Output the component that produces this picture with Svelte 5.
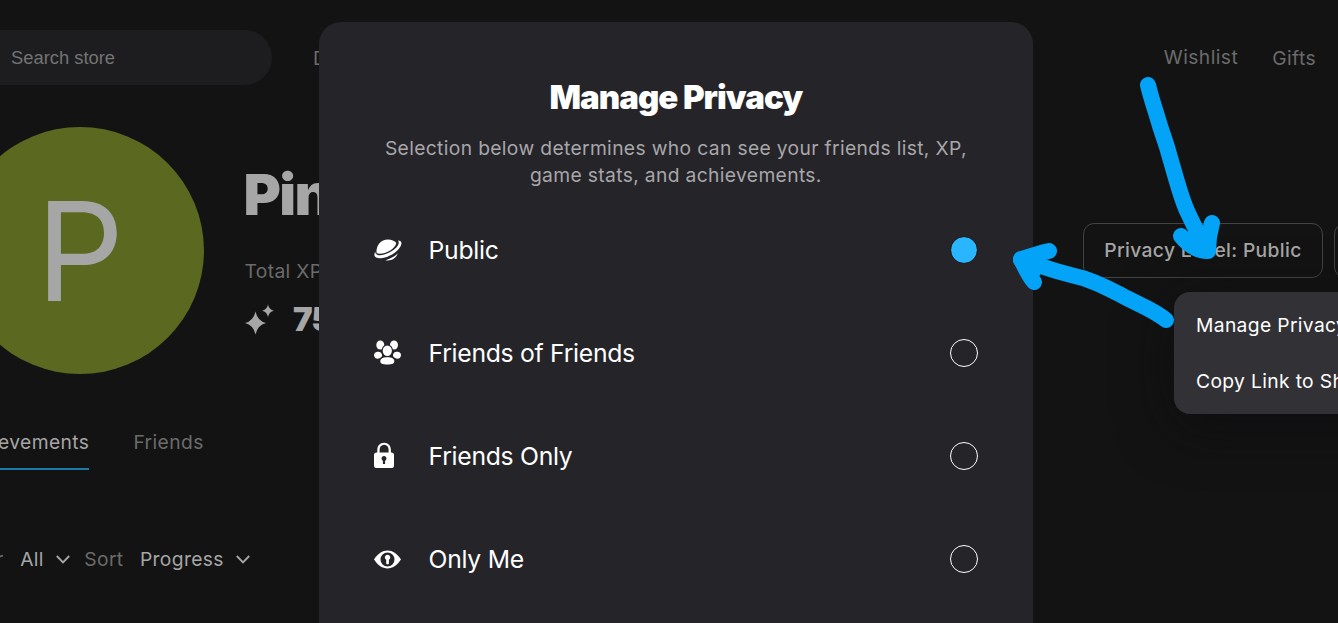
<script lang="ts">
  type PrivacyLevel = {
    id: 'public' | 'fof' | 'friends' | 'me';
    label: string;
  };

  const levels: PrivacyLevel[] = [
    { id: 'public', label: 'Public' },
    { id: 'fof', label: 'Friends of Friends' },
    { id: 'friends', label: 'Friends Only' },
    { id: 'me', label: 'Only Me' },
  ];

  let selected = $state('public');
</script>

{#snippet chevron()}
  <svg class="chevron" width="14" height="9" viewBox="0 0 14 9" fill="none" stroke="currentColor" stroke-width="1.9">
    <polyline points="0.8 1 7 7.3 13.2 1"></polyline>
  </svg>
{/snippet}

<div class="app">
  <div class="page">
    <header class="topbar">
      <div class="search">Search store</div>
      <nav class="nav-left"><span>Discover</span></nav>
      <nav class="nav-right">
        <span class="wishlist">Wishlist</span>
        <span>Gifts</span>
      </nav>
    </header>

    <section class="profile">
      <div class="avatar">P</div>
      <div class="identity">
        <h1>Pinkie</h1>
        <div class="xp-label">Total XP</div>
        <div class="xp">
          <svg width="30" height="31" viewBox="0 0 30 31" fill="currentColor">
            <path d="M10.500 7.500Q12.600 17 21 19Q12.600 21 10.500 30.500Q8.400 21 0 19Q8.400 17 10.500 7.500Z" />
            <path d="M23 0.500Q24 5.600 29 6.700Q24 7.800 23 13Q22 7.800 17 6.700Q22 5.600 23 0.500Z" />
          </svg>
          <span>750</span>
        </div>
      </div>
      <div class="actions">
        <button type="button">Privacy Level: Public</button>
        <button type="button" class="more" aria-label="More"></button>
      </div>
    </section>

    <nav class="tabs">
      <span class="tab active">Achievements</span>
      <span class="tab">Friends</span>
    </nav>

    <div class="filters">
      <span class="dim">Filter</span>
      <span class="value">All</span>
      {@render chevron()}
      <span class="dim sort">Sort</span>
      <span class="value">Progress</span>
      {@render chevron()}
    </div>
  </div>

  <div class="menu">
    <div>Manage Privacy</div>
    <div>Copy Link to Share</div>
  </div>

  <div class="modal" role="dialog" aria-labelledby="privacy-title">
    <h2 id="privacy-title">Manage Privacy</h2>
    <p>Selection below determines who can see your friends list, XP, game stats, and achievements.</p>
    <div class="options" role="radiogroup">
      {#each levels as level (level.id)}
        <button
          type="button"
          class="option"
          role="radio"
          aria-checked={selected === level.id}
          onclick={() => (selected = level.id)}
        >
          <svg class="icon" width="28" height="28" viewBox="0 0 28 28" fill="currentColor">
            {#if level.id === 'public'}
              <path d="M2.600 17.300C1.500 9.500 7 3.400 14 3.400C17.600 3.400 20.600 4.600 22.300 7C21.500 12.500 11 19.300 2.600 17.300Z" />
              <path d="M24 4.600C26.600 4.600 27.900 6 27.300 8.200C25.800 14.500 15.500 21.600 7 22.300C2.500 22.600 0 21 0.400 18.200C0.500 17.300 0.800 16.500 1.200 15.800C1.400 18.200 3 19.500 6.500 19.300C14 18.700 23.500 12.500 24.600 7.800C24.900 6.500 24.700 5.500 24 4.600Z" />
              <path d="M11.500 24.200C16.500 22.800 21 20.200 23.800 17.300C22 22.300 17.200 25.300 11.500 24.200Z" />
            {:else if level.id === 'fof'}
              <ellipse cx="6.300" cy="6" rx="4" ry="4.500" />
              <ellipse cx="20" cy="6" rx="4" ry="4.500" />
              <ellipse cx="4" cy="16.200" rx="4" ry="3.400" transform="rotate(-12 4 16.200)" />
              <ellipse cx="23" cy="16.200" rx="4" ry="3.400" transform="rotate(12 23 16.200)" />
              <ellipse class="cut" cx="13.300" cy="11.700" rx="4.600" ry="5.200" />
              <path class="cut" d="M13.300 18.300C18 18.300 20.300 19.800 20.300 22.300C20.300 24.800 18.500 25.500 13.300 25.500C8.200 25.500 6.300 24.800 6.300 22.300C6.300 19.800 8.700 18.300 13.300 18.300Z" />
            {:else if level.id === 'friends'}
              <path
                fill-rule="evenodd"
                d="M3.300 10.500V8C3.300 3.600 6 0.700 10.100 0.700C14.200 0.700 16.900 3.600 16.900 8V10.500H17.500Q20 10.500 20 13V23.500Q20 26 17.500 26H2.500Q0 26 0 23.500V13Q0 10.500 2.500 10.500ZM5.600 10.500H14.600V8C14.600 4.900 13 2.800 10.100 2.800C7.200 2.800 5.600 4.900 5.600 8ZM11.100 22V18.700A2.500 2.500 0 1 0 8.900 18.700V22Z"
              />
            {:else}
              <path
                fill-rule="evenodd"
                d="M0 14.500C4 8.500 8.500 5.600 13.500 5.600S23 8.500 27 14.500C23 20.500 18.500 23.400 13.500 23.400S4 20.500 0 14.500ZM13.500 7.500A7 7 0 1 0 13.500 21.500A7 7 0 1 0 13.500 7.500Z"
              />
              <path d="M12.200 18.700V14.800A2.700 2.700 0 1 1 14.900 14.800V18.700Q13.500 19.800 12.200 18.700Z" />
            {/if}
          </svg>
          <span class="label">{level.label}</span>
          <span class="radio" class:checked={selected === level.id}></span>
        </button>
      {/each}
    </div>
  </div>

  <svg class="arrows" width="1338" height="623" viewBox="0 0 1338 623">
    <path d="M1148 85C1151 98 1156 112 1160 126C1165 140 1169 153 1173 168C1178 185 1182 201 1188 213C1194 226 1200 238 1208 250" />
    <path d="M1181 236C1189 246 1199 251 1208 251C1208 239 1210 230 1212 223M1196 232L1204 246" />
    <path d="M1166 320C1153 309 1137 304 1121 295C1105 287 1090 279 1071 275C1050 270 1040 265 1021 260" />
    <path d="M1049 251C1038 253 1030 257 1021 259C1025 268 1029 276 1034 282M1024 260L1034 270" />
  </svg>
</div>

<style>
  :global(body) {
    background: #131313;
    overflow: hidden;
  }

  .app {
    position: relative;
    width: 1338px;
    height: 623px;
    overflow: hidden;
    background: #131313;
    color: #a6a6a6;
    font-family: Inter, sans-serif;
    font-size: 19.25px;
    letter-spacing: 0.35px;
    white-space: nowrap;
  }

  button {
    font: inherit;
    letter-spacing: inherit;
    color: inherit;
    background: none;
    border: 0;
    padding: 0;
  }

  .page {
    margin-left: -44px;
    width: 1382px;
  }

  .topbar {
    display: flex;
    align-items: center;
    padding-top: 30px;
    height: 55px;
    color: #6b6b6b;
  }

  .search {
    box-sizing: border-box;
    width: 316px;
    height: 55px;
    padding-left: 55px;
    border-radius: 28px;
    background: #1d1d1f;
    color: #737374;
    font-family: 'Liberation Sans', sans-serif;
    font-size: 18.35px;
    letter-spacing: 0;
    line-height: 56px;
  }

  .nav-left {
    margin-left: 41px;
  }

  .nav-right {
    display: flex;
    gap: 34px;
    margin-left: auto;
    margin-right: 22px;
    line-height: 28px;
    letter-spacing: 0.42px;
  }

  .wishlist {
    margin-top: -1px;
  }

  .profile {
    display: flex;
    height: 248px;
    margin-top: 42px;
  }

  .avatar {
    width: 248px;
    height: 247px;
    border-radius: 50%;
    background: #5b681f;
    font-size: 138px;
    line-height: 247px;
    letter-spacing: 0;
    text-align: center;
  }

  .identity {
    margin-left: 40.500px;
    padding-top: 33px;
  }

  h1 {
    margin: 0 0 0 -1px;
    font-size: 57px;
    font-weight: 900;
    line-height: 70px;
    letter-spacing: -1.6px;
  }

  .xp-label {
    margin-top: 27px;
    line-height: 28px;
    color: #6b6b6b;
  }

  .xp {
    display: flex;
    align-items: center;
    gap: 18.500px;
    margin-top: 14px;
    font-size: 33px;
    font-weight: 900;
    line-height: 40px;
    letter-spacing: -1px;
  }

  .actions {
    display: flex;
    gap: 11px;
    margin: 96px -51px 0 auto;
  }

  .actions button {
    box-sizing: border-box;
    width: 240px;
    height: 55px;
    padding-bottom: 2px;
    border: 1px solid #434343;
    border-radius: 11px;
    font-weight: 500;
  }

  .actions .more {
    width: 55px;
  }

  .tabs {
    display: flex;
    gap: 44px;
    margin-top: 53px;
    color: #6b6b6b;
    letter-spacing: 0.4px;
  }

  .tab {
    height: 40px;
    line-height: 28px;
    border-bottom: 2px solid transparent;
  }

  .tab.active {
    color: #a6a6a6;
    border-color: #1c7bab;
  }

  .filters {
    display: flex;
    align-items: center;
    margin-top: 74px;
    line-height: 29px;
  }

  .dim {
    margin-right: 16.500px;
    padding-top: 1px;
    color: #6b6b6b;
  }

  .chevron {
    margin-left: 12.500px;
  }

  .sort {
    margin-left: 14px;
  }

  .menu {
    position: absolute;
    left: 1174px;
    top: 292px;
    box-sizing: border-box;
    width: 230px;
    height: 122px;
    padding: 5px 22px;
    border-radius: 16px;
    background: #323136;
    box-shadow: 0 11px 55px rgba(11, 12, 17, 0.6);
    color: #fff;
    line-height: 56px;
  }

  .modal {
    position: absolute;
    left: 318.600px;
    top: 22px;
    box-sizing: border-box;
    width: 714.500px;
    height: 660px;
    padding: 55px 55px 0;
    border-radius: 22px;
    background: #252429;
    color: #fff;
  }

  h2 {
    margin: 0;
    font-size: 33px;
    font-weight: 900;
    line-height: 40px;
    letter-spacing: -0.97px;
    text-align: center;
  }

  p {
    margin: 18px 0 0;
    line-height: 27px;
    color: #a8a7a9;
    text-align: center;
    white-space: normal;
  }

  .options {
    display: grid;
    grid-auto-rows: 103px;
    margin-top: 9px;
  }

  .option {
    display: flex;
    align-items: center;
    font-size: 24.75px;
    letter-spacing: -0.3px;
    text-align: left;
  }

  .icon {
    margin-right: 27px;
  }

  .cut {
    stroke: #252429;
    stroke-width: 2.2;
    paint-order: stroke;
  }

  .label {
    flex: 1;
  }

  .radio {
    box-sizing: border-box;
    width: 28px;
    height: 28px;
    border: 1.4px solid #fff;
    border-radius: 50%;
  }

  .radio.checked {
    border: 1px solid #1d1f25;
    background: #2ab6ff;
    background-clip: padding-box;
  }

  .arrows {
    position: absolute;
    inset: 0;
    fill: none;
    stroke: #03a4f7;
    stroke-width: 16;
    stroke-linecap: round;
    stroke-linejoin: round;
    pointer-events: none;
  }
</style>
